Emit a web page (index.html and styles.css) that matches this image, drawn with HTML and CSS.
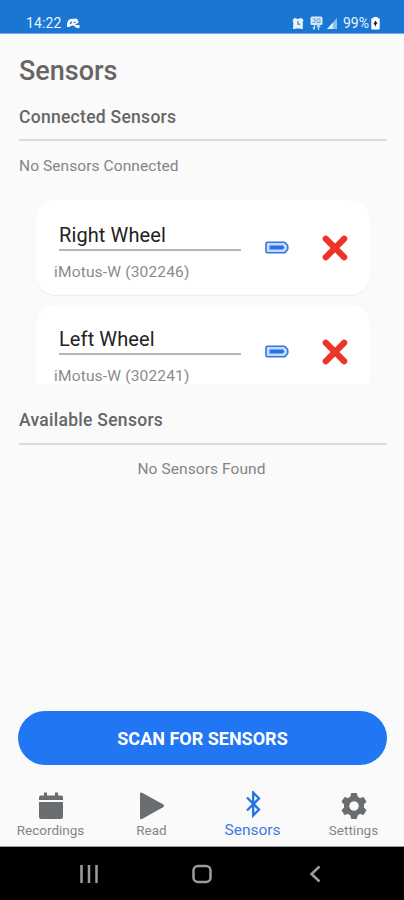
FILE: index.html
```html
<!DOCTYPE html>
<html lang="en">
<head>
<meta charset="utf-8">
<title>Sensors</title>
<link rel="stylesheet" href="styles.css">
</head>
<body>
<header class="status">
  <span class="clock">14:22</span>
  <svg class="discord" width="15" height="13" viewBox="0 0 15 13"><path d="M1 8C1 4 3 1.800 5 2L10 1.500C12 2 12.500 4 12.500 6L9.500 7L9.500 9L6 8.500L3 10L1 10Z" fill="#f4f9ff"/><path d="M4 6.800L6 5M8 5.800L9.500 5" stroke="#1976d2" stroke-width="1.300"/><path d="M8.500 8H13.500V11H11L9 10Z" fill="#f4f9ff"/></svg>
  <span class="spacer"></span>
  <svg class="alarm" width="12" height="13" viewBox="0 0 12 13"><path d="M.5 3L3 .8 4.500 1.800H7.500L9 .8 11.500 3 10.800 5V10L11 12H9L8 11.500H4L3 12H1L1.200 10V5Z" fill="#e9f3fc"/><path d="M6 4V7.200H8.300" fill="none" stroke="#1976d2" stroke-width="1.100"/></svg>
  <svg class="network" width="13" height="15" viewBox="0 0 13 15"><rect x=".5" y=".5" width="12" height="8.500" rx="1.500" fill="#d4e7fa"/><path d="M2.500 3H5V6.500H2.500M7 6.500V3H10V6.500Z" fill="none" stroke="#6da4dd"/><path d="M4.500 9V13M2.800 11.500L4.500 13.500M8.500 14V9M6.800 11L8.500 9 10.200 11" fill="none" stroke="#bad8f5" stroke-width="1.300"/></svg>
  <svg class="signal" width="10" height="11" viewBox="0 0 10 11"><path d="M0 11L10 0V11Z" fill="#8fbdec"/><path d="M0 11L6 4.400V11Z" fill="#d9eafa"/></svg>
  <span class="percent">99%</span>
  <svg class="charge" width="9" height="13" viewBox="0 0 9 13"><path d="M2.500 0H6.500V1.300H8Q8.700 1.300 8.700 2.300V11.500Q8.700 12.500 7.700 12.500H1.300Q.3 12.500 .3 11.500V2.300Q.3 1.300 1 1.300H2.500Z" fill="#fff"/><path d="M4.500 3.500L6.600 6.700H5.500L4.500 9.800 3.500 7.200H2.400Z" fill="#17212d"/></svg>
</header>
<main>
  <h1>Sensors</h1>
  <h2 class="connected">Connected Sensors</h2>
  <p class="note">No Sensors Connected</p>
  <section class="list">
    <article class="card">
      <div class="details"><div class="name">Right Wheel</div><div class="model">iMotus-W (302246)</div></div>
      <svg class="battery" width="24" height="13" viewBox="0 0 24 13"><path d="M2.500 1.200H19Q20 1.200 20.500 2L22.700 4.500V8.500L20.500 11Q20 11.800 19 11.800H2.500Q1 11.800 1 10.300V2.700Q1 1.200 2.500 1.200Z" fill="#c6dcff" stroke="#3676dd" stroke-width="1.600"/><path d="M4.500 4.500H18L19.500 6.500 18 8.500H4.500Z" fill="#2671e5"/></svg>
      <svg class="remove" width="26" height="26" viewBox="0 0 26 26"><path d="M3.800 3.800L22.200 22.200M22.200 3.800L3.800 22.200"/></svg>
    </article>
    <article class="card second">
      <div class="details"><div class="name">Left Wheel</div><div class="model">iMotus-W (302241)</div></div>
      <svg class="battery" width="24" height="13" viewBox="0 0 24 13"><path d="M2.500 1.200H19Q20 1.200 20.500 2L22.700 4.500V8.500L20.500 11Q20 11.800 19 11.800H2.500Q1 11.800 1 10.300V2.700Q1 1.200 2.500 1.200Z" fill="#c6dcff" stroke="#3676dd" stroke-width="1.600"/><path d="M4.500 4.500H18L19.500 6.500 18 8.500H4.500Z" fill="#2671e5"/></svg>
      <svg class="remove" width="26" height="26" viewBox="0 0 26 26"><path d="M3.800 3.800L22.200 22.200M22.200 3.800L3.800 22.200"/></svg>
    </article>
  </section>
  <h2>Available Sensors</h2>
  <p class="note empty">No Sensors Found</p>
  <button class="scan">SCAN FOR SENSORS</button>
</main>
<nav class="tabs">
  <a class="tab"><svg width="28" height="30" viewBox="0 0 28 30"><path d="M2 9V6.500Q2 4.500 4 4.500H7V1.500H10V4.500H18V1.500H21V4.500H24Q26 4.500 26 6.500V9ZM2 11H26V26Q26 28 24 28H4Q2 28 2 26Z"/></svg><span>Recordings</span></a>
  <a class="tab"><svg width="28" height="30" viewBox="0 0 28 30"><path d="M2 3Q2 .8 4 1.800L25 13.200Q27 14.800 25 16.200L4 28Q2 29 2 27Z"/></svg><span>Read</span></a>
  <a class="tab active"><svg width="28" height="30" viewBox="0 0 28 30"><path d="M8 6.500L20 18.500 14.200 24.500V1.500L20 7.500 8 19.500"/></svg><span>Sensors</span></a>
  <a class="tab"><svg width="28" height="30" viewBox="0 0 28 30"><path fill-rule="evenodd" stroke-width="1" stroke-linejoin="round" stroke="#6a6d6f" d="M11.500 2.500H16.500L17.300 6 20 7.600 23.400 6.500 26 10.800 23.500 13.300V16.700L26 19.200 23.400 23.500 20 22.400 17.300 24 16.500 27.500H11.500L10.700 24 8 22.400 4.600 23.500 2 19.200 4.500 16.700V13.300L2 10.800 4.600 6.500 8 7.600 10.700 6ZM14 9.800A5.200 5.200 0 1 0 14 20.200A5.200 5.200 0 1 0 14 9.800Z"/></svg><span>Settings</span></a>
</nav>
<footer class="system">
  <svg width="20" height="20" viewBox="0 0 20 20"><path d="M2.500 1V19M10 1V19M17.500 1V19"/></svg>
  <svg width="20" height="20" viewBox="0 0 20 20"><rect x="1.500" y="2" width="17" height="16" rx="4.500"/></svg>
  <svg width="20" height="20" viewBox="0 0 20 20"><path d="M14.500 2.500L6.500 10 14.500 17.500"/></svg>
</footer>
</body>
</html>
```
FILE: styles.css
```css
* { box-sizing: border-box; }
body { margin: 0; width: 404px; height: 900px; overflow: hidden; display: flex; flex-direction: column; background: #fafafa; color: #757575; font-family: Roboto, sans-serif; }
.status { height: 34px; flex: none; display: flex; align-items: center; padding: 13px 24px 0 26px; background: #1976d2; border-bottom: 1px solid #76ace2; color: #e9f3fd; font-size: 14px; }
.clock { letter-spacing: .1px; }
.discord { margin-left: 5px; }
.spacer { flex: 1; }
.network { margin-left: 6px; }
.signal { margin-left: 4px; margin-top: 1px; }
.percent { margin-left: 6px; }
.charge { margin-left: 2px; }
main { height: 731px; flex: none; padding: 0 17px 0 19px; display: flex; flex-direction: column; }
h1 { margin: 20px 0 0; height: 34px; line-height: 34px; font-size: 27px; font-weight: 500; color: #666; }
h2 { margin: 25px 0 0; height: 36px; flex: none; border-bottom: 2px solid #dcdcdc; line-height: 23px; font-size: 17.500px; font-weight: 500; color: #666; letter-spacing: .28px; }
h2.connected { margin-top: 18px; height: 35px; line-height: 22px; }
.note { margin: 15px 0 0; height: 20px; line-height: 20px; font-size: 15.500px; color: #858585; letter-spacing: .08px; }
.empty { text-align: center; margin: 14px 3px 0 0; }
.list { margin: 24px 17px 0; height: 184px; overflow: hidden; flex: none; }
.card { height: 96px; display: flex; align-items: flex-start; padding: 22px 21px 0 18px; background: #fff; border-radius: 20px; box-shadow: inset 0 -1px 1px #ececec; }
.second { margin-top: 9px; padding-top: 21px; }
.details { width: 187px; }
.name { margin-left: 5px; height: 29px; width: 182px; line-height: 26px; font-size: 20px; letter-spacing: .1px; color: #222; border-bottom: 2px solid #b5b5b5; }
.model { height: 22px; margin-top: 10px; line-height: 22px; font-size: 15.500px; letter-spacing: .17px; color: #8b8b8b; }
.battery { margin: 19px 0 0 24px; }
.remove { margin: 13px 0 0 33px; fill: none; stroke: #ee3329; stroke-width: 6.200; stroke-linecap: round; }
.scan { margin: auto 0 0 -1px; height: 54px; border: 0; border-radius: 27px; background: #2176f3; color: #fff; font: 700 18px/52px Roboto, sans-serif; padding: 2px 0 0; }
.tabs { height: 82px; flex: none; display: grid; grid-template-columns: repeat(4, 1fr); padding-top: 26px; border-bottom: 1px solid #999; }
.tab { display: flex; flex-direction: column; align-items: center; font-size: 13.500px; line-height: 20px; color: #858585; fill: #6a6d6f; }
.tab span { margin-top: -1px; }
.active { color: #3b7ce2; font-size: 15.500px; }
.active path { fill: none; stroke: #2472e3; stroke-width: 2.300; }
.system { flex: 1; background: #000; display: grid; grid-template-columns: repeat(3, 113px); justify-content: center; align-items: center; justify-items: center; }
.system svg { fill: none; stroke: #9d9d9d; stroke-width: 2.500; }
```
